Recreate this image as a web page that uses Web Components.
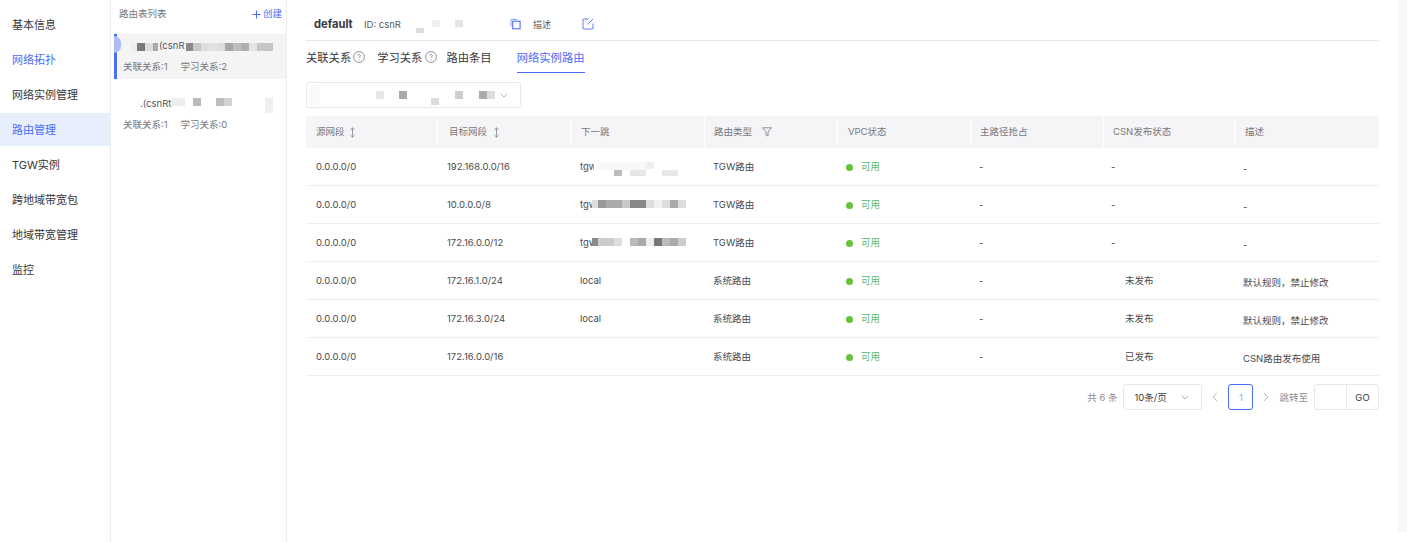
<!DOCTYPE html>
<html lang="zh"><head><meta charset="utf-8"><title>路由管理</title>
<style>
html,body{margin:0;padding:0;background:#fff;height:542px;overflow:hidden}
body{font-family:Inter,"Noto Sans CJK SC",sans-serif;color:#3a3a3f;-webkit-font-smoothing:antialiased}
</style></head><body>
<app-shell>
  <side-nav slot="nav"></side-nav>
  <route-list slot="list"></route-list>
  <detail-head slot="main"></detail-head>
  <tab-bar slot="main"></tab-bar>
  <instance-select slot="main"></instance-select>
  <route-table slot="main"></route-table>
  <pager-bar slot="main"></pager-bar>
</app-shell>
<script>
const BLUE='#4a6cf7';
function el(name,html){customElements.define(name,class extends HTMLElement{connectedCallback(){if(this.shadowRoot)return;this.attachShadow({mode:'open'}).innerHTML=typeof html==='function'?html(this):html;}});}

/* masked (pixelated) value: data = "x,y,w,h,color;..." relative to the host box */
el('blur-mask',h=>{
  const blocks=(h.getAttribute('data')||'').split(';').filter(Boolean).map(s=>{const [x,y,w,ht,c]=s.split(',');return `<i style="left:${x}px;top:${y}px;width:${w}px;height:${ht}px;background:${c}"></i>`}).join('');
  return `<style>:host{display:block;position:absolute;left:0;top:0;width:0;height:0;pointer-events:none}i{position:absolute;display:block;filter:blur(.5px)}</style>${blocks}`;
});

el('app-shell',`<style>
:host{display:grid;grid-template-columns:111px 176px 1fr 9px;height:542px;position:relative}
.nav{border-right:1px solid #eeeef1}
.list{border-right:1px solid #eeeef1}
.main{padding:0 19px;min-width:0;display:flex;flex-direction:column}
.track{background:#f8f8fa}
.corner{position:absolute;right:0;bottom:0;width:22px;height:10px;background:#fff;border-radius:2px 0 0 0}
</style>
<div class="nav"><slot name="nav"></slot></div>
<div class="list"><slot name="list"></slot></div>
<div class="main"><slot name="main"></slot></div>
<div class="track"></div><div class="corner"></div>`);

el('side-nav',()=>{
 const items=[['基本信息'],['网络拓扑','on'],['网络实例管理'],['路由管理','on act'],['TGW实例'],['跨地域带宽包'],['地域带宽管理'],['监控']];
 return `<style>:host{display:flex;flex-direction:column;gap:2px;padding-top:8px;font-size:11px}
 div{height:33px;line-height:34px;padding-left:12px;color:#37373c}
 .on{color:${BLUE}}.act{background:#e8effc}</style>`+items.map(i=>`<div class="${i[1]||''}">${i[0]}</div>`).join('');
});

el('route-card',h=>`<style>
:host{display:block;height:45px;position:relative;font-size:9.5px;color:#77777d}
:host([active]){background:#f4f4f5}
.n{position:absolute;top:5px;left:0;line-height:14px;font-size:9.5px;color:#55555b;white-space:nowrap}
.m{position:absolute;top:26px;left:5px;line-height:14px;white-space:nowrap;display:flex;gap:13px}
.bar{display:none;position:absolute;left:-4px;top:0;bottom:0;width:3px;background:${BLUE}}
.pip{display:none;position:absolute;left:-4px;top:2px;width:7px;height:17px;background:#aebcf6;border-radius:0 7px 7px 0}
:host([active]) .bar,:host([active]) .pip{display:block}
</style><div class="bar"></div><div class="pip"></div>
<span class="n" style="padding-left:${h.getAttribute('nx')}px">${h.getAttribute('name')}</span>
<div class="m"><span>关联关系:${h.getAttribute('a')}</span><span>学习关系:${h.getAttribute('b')}</span></div><slot></slot>`);

el('route-list',`<style>
:host{display:block;position:relative}
.t{display:flex;justify-content:space-between;align-items:flex-start;height:34px;box-sizing:border-box;padding:7px 4px 0 8px;line-height:14px;font-size:9.5px;color:#77777d}
.t b{font-weight:400;color:${BLUE};display:flex;align-items:center;gap:2px}
.cards{padding-left:7px;display:flex;flex-direction:column;gap:13px}
svg{display:block}
</style>
<div class="t"><span>路由表列表</span><b><svg width="9" height="9" viewBox="0 0 9 9"><path d="M4.5 .5v8M.5 4.5h8" stroke="${BLUE}" stroke-width="1" fill="none"/></svg>创建</b></div>
<div class="cards">
<route-card active name="(csnR" nx="41" a="1" b="2"><blur-mask data="12,9,8,8,#eeeeee;19,9,8,8,#7b7b7b;27,9,8,8,#dcdcdc;35,9,5,8,#ababab;68,9,7,8,#8a8a8a;75,9,8,8,#c9c9c9;83,9,8,8,#dedede;91,9,8,8,#e3e3e3;99,9,8,8,#dcdcdc;107,9,8,8,#a7a7a7;115,9,8,8,#bdbdbd;123,9,8,8,#b0b0b0;131,9,8,8,#e4e4e4;139,9,16,8,#c6c6c6"></blur-mask></route-card>
<route-card name=".(csnRt" nx="22" a="1" b="0"><blur-mask data="54,6,13,8,#ededed;75,6,8,8,#bbbbbb;98,6,8,8,#bdbdbd;106,6,8,8,#d3d3d3;147,6,8,15,#efefef"></blur-mask></route-card>
</div>`);

el('detail-head',`<style>
:host{display:flex;align-items:center;height:32px;padding-top:8px;border-bottom:1px solid #e9e9ec;position:relative;padding-left:8px;font-size:9.5px;color:#5a5a60;flex:none}
b{font-size:11.2px;font-weight:700;color:#38383d;width:50px}
.id{width:146px}
.d{margin-left:12px;width:49px;font-size:9px}
svg{display:block;flex:none}
</style>
<b>default</b><span class="id">ID: csnR</span>
<svg width="11" height="12" viewBox="0 0 12 12" fill="none" stroke="${BLUE}" stroke-width="1"><path d="M1 8.5V1.5a.5.5 0 0 1 .5-.5H8" opacity=".75"/><rect x="3" y="3" width="8" height="8.2" stroke-width="1.2"/></svg>
<span class="d">描述</span>
<svg width="12" height="12" viewBox="0 0 12 12" fill="none" stroke="${BLUE}" stroke-width="1" opacity=".85"><path d="M6.5 1H1v10h10V5.5"/><path d="M5.5 6.5L11 1"/></svg>
<blur-mask data="110,28,8,5,#dddddd;126,20,8,7,#f0f0f0;149,20,8,7,#e4e4e4"></blur-mask>`);

el('q-mark',`<style>:host{display:inline-block;width:12px;height:12px;margin-left:var(--qm,2px)}svg{display:block}</style>
<svg width="12" height="12" viewBox="0 0 12 12" fill="none"><circle cx="6" cy="6" r="5.4" stroke="#77777d" stroke-width=".8"/><path d="M4.7 4.7a1.3 1.3 0 1 1 2 1.1c-.5.3-.7.6-.7 1.1" stroke="#77777d" stroke-width=".8"/><circle cx="6" cy="8.7" r=".5" fill="#77777d"/></svg>`);

el('tab-bar',`<style>
:host{display:flex;height:32px;flex:none;font-size:11.3px;color:#37373c;align-items:flex-start}
span{display:flex;align-items:center;height:32px;box-sizing:border-box;white-space:nowrap}
.a{margin-left:12px;--qm:3px}.c{margin-left:9px}
.d{margin-left:25px;width:68px;justify-content:center;color:${BLUE};border-bottom:1px solid ${BLUE}}
</style>
<span>关联关系<q-mark></q-mark></span><span class="a">学习关系<q-mark></q-mark></span><span class="c">路由条目</span><span class="d">网络实例路由</span>`);

el('instance-select',`<style>
:host{display:block;width:215px;height:26px;box-sizing:border-box;border:1px solid #e8e8ec;border-radius:3px;margin-top:9px;position:relative;flex:none}
svg{position:absolute;right:12px;top:10px}
</style>
<blur-mask data="3,2,10,20,#fafafa;69,8,8,8,#e6e6e6;92,8,8,8,#a8a8a8;124,15,8,7,#dcdcdc;148,8,8,8,#cccccc;172,8,8,8,#a9a9a9;180,8,8,8,#dddddd"></blur-mask>
<svg width="8" height="5" viewBox="0 0 10 6" fill="none" stroke="#9a9aa0" stroke-width="1"><path d="M.8.8L5 5l4.2-4.2"/></svg>`);

const SORT=`<svg width="7" height="11" viewBox="0 0 7 12" fill="none" stroke="#77777d" stroke-width=".8"><path d="M3.5 1v10M1.2 3.2L3.5 1l2.3 2.2M1.2 8.8L3.5 11l2.3-2.2"/></svg>`;
const FUNNEL=`<svg width="10" height="10" viewBox="0 0 10 10" fill="none" stroke="#77777d" stroke-width=".8"><path d="M.6.8h8.8L6 5v4L4 8V5z"/></svg>`;
el('route-table',()=>{
 const headCols='132px 133px 134px 133px 133px 133px 131px 1fr';
 const cols='132px 132px 135px 133px 133px 133px 131px 1fr';
 const heads=[['源网段',SORT,10,4],['目标网段',SORT,11,6],['下一跳','',10],['路由类型',FUNNEL,9,10],['VPC状态','',10],['主路径抢占','',9],['CSN发布状态','',9],['描述','',10]];
 const pads=[10,9,10,8,8,8,7,8];
 const rows=[
  ['0.0.0.0/0','192.168.0.0/16','tgw','TGW路由','-','-','-',"24,12,6,12,#ffffff;28,14,48,8,#f8f8f8;44,22,8,6,#bcbcbc;60,22,16,6,#e6e6e6;76,14,8,7,#eeeeee;92,22,16,6,#e8e8e8"],
  ['0.0.0.0/0','10.0.0.0/8','tgw','TGW路由','-','-','-',"22,14,6,8,#dddddd;28,14,8,8,#999999;36,14,16,8,#a9a9a9;52,14,8,8,#c9c9c9;60,14,16,8,#888888;76,14,8,8,#dddddd;84,14,8,8,#f0f0f0;92,14,8,8,#dddddd;100,14,8,8,#aaaaaa;108,14,8,8,#dddddd"],
  ['0.0.0.0/0','172.16.0.0/12','tgw','TGW路由','-','-','-',"22,14,6,8,#8a8a8a;28,14,16,8,#cccccc;44,14,8,8,#dedede;60,14,8,8,#bbbbbb;68,14,8,8,#aaaaaa;76,14,8,8,#eeeeee;84,14,8,8,#777777;92,14,8,8,#bbbbbb;100,14,8,8,#aaaaaa;108,14,8,8,#cccccc"],
  ['0.0.0.0/0','172.16.1.0/24','local','系统路由','-','未发布','默认规则，禁止修改',''],
  ['0.0.0.0/0','172.16.3.0/24','local','系统路由','-','未发布','默认规则，禁止修改',''],
  ['0.0.0.0/0','172.16.0.0/16','','系统路由','-','已发布','CSN路由发布使用','']];
 return `<style>
 :host{display:block;margin-top:8px;font-size:9.5px;flex:none;line-height:14px}
 .r{display:grid;grid-template-columns:${cols}}
 .h{height:32px;grid-template-columns:${headCols}}
 .h>div{background:#f5f5f8;color:#77777d;display:flex;align-items:center;border-right:1px solid #fff;white-space:nowrap}
 .h>div:last-child{border-right:0}
 .h svg{margin-left:var(--g)}
 .b{height:38px;border-bottom:1px solid #eeeef1;box-sizing:border-box;color:#4a4a50}
 .b>div{display:flex;align-items:center;position:relative;white-space:nowrap;padding-top:1px}
 .dot{width:7px;height:7px;border-radius:50%;background:#67c23a;margin-right:8px}
 .ok{color:#5ab774}
 </style>
 <div class="r h">${heads.map(h=>`<div style="padding-left:${h[2]}px;--g:${h[3]||0}px"><span>${h[0]}</span>${h[1]}</div>`).join('')}</div>
 ${rows.map(r=>`<div class="r b">
  <div style="padding-left:${pads[0]}px">${r[0]}</div>
  <div style="padding-left:${pads[1]}px">${r[1]}</div>
  <div style="padding-left:${pads[2]}px">${r[2]}<blur-mask data="${r[7]}"></blur-mask></div>
  <div style="padding-left:${pads[3]}px">${r[3]}</div>
  <div style="padding-left:${pads[4]}px"><span class="dot"></span><span class="ok">可用</span></div>
  <div style="padding-left:${pads[5]}px">-</div>
  <div style="padding-left:${r[5]==='-'?pads[6]:pads[6]+14}px">${r[5]}</div>
  <div style="padding-left:${pads[7]}px;padding-top:4px">${r[6]}</div>
 </div>`).join('')}`;
});

el('pager-bar',`<style>
:host{display:flex;justify-content:flex-end;align-items:center;height:26px;margin-top:8px;font-size:9.5px;color:#8f8f95;flex:none}
.box{box-sizing:border-box;height:26px;border:1px solid #e8e8ec;border-radius:3px;display:flex;align-items:center}
.sel{width:79px;margin-left:6px;padding:0 12px 0 10px;justify-content:space-between;color:#3a3a3f}
.arr{display:flex;width:26px;justify-content:center}
.num{width:25px;justify-content:center;border-color:${BLUE};color:#90a4f6}
.go{width:65px;margin-left:6px}
.go i{flex:none;width:31px;height:100%;border-right:1px solid #e8e8ec}
.go span{flex:1;text-align:center;color:#3a3a3f}
svg{display:block}
</style>
<span>共 6 条</span>
<div class="box sel"><span>10条/页</span><svg width="8" height="5" viewBox="0 0 10 6" fill="none" stroke="#9a9aa0" stroke-width="1"><path d="M.8.8L5 5l4.2-4.2"/></svg></div>
<div class="arr"><svg width="6" height="10" viewBox="0 0 6 10" fill="none" stroke="#b5b5ba" stroke-width=".9"><path d="M5.2.8L1 5l4.2 4.2"/></svg></div>
<div class="box num">1</div>
<div class="arr"><svg width="6" height="10" viewBox="0 0 6 10" fill="none" stroke="#b5b5ba" stroke-width=".9"><path d="M.8.8L5 5 .8 9.2"/></svg></div>
<span>跳转至</span>
<div class="box go"><i></i><span>GO</span></div>`);
</script>
</body></html>
